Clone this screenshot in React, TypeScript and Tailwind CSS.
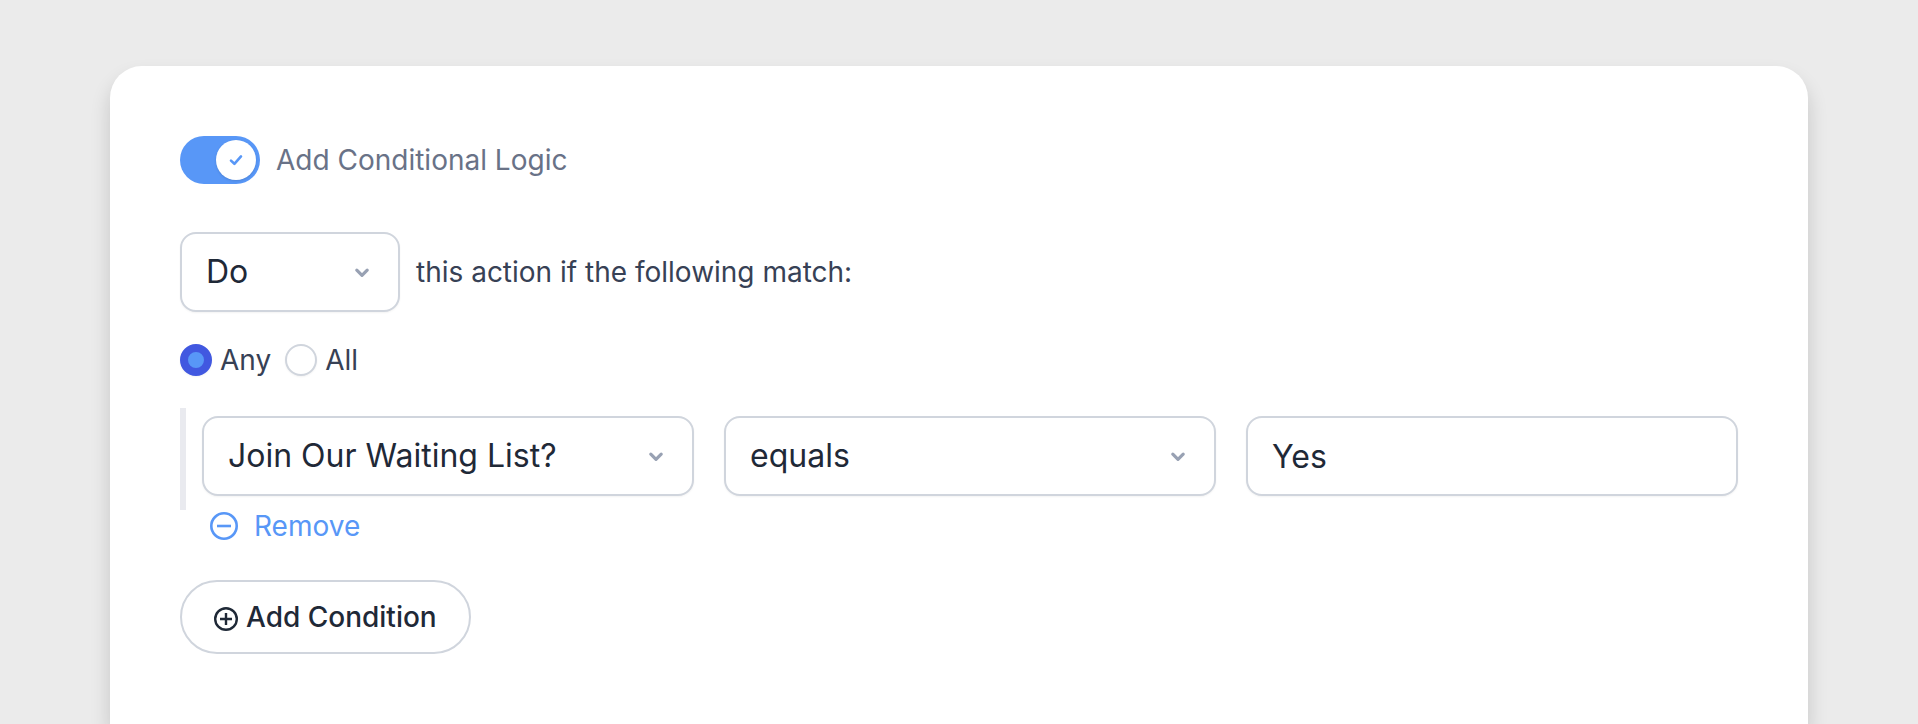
import { ReactNode, useState } from "react";

type SelectFieldProps = {
  label: string;
  value: string;
  options: string[];
  className?: string;
  onChange: (value: string) => void;
};

function ChevronIcon() {
  return (
    <svg
      aria-hidden="true"
      className="pointer-events-none absolute top-1/2 right-6 size-7 -translate-y-1/2 text-[#98a1b3]"
      fill="none"
      stroke="currentColor"
      strokeLinecap="round"
      strokeLinejoin="round"
      strokeWidth="3.2"
      viewBox="0 0 28 28"
    >
      <path d="M8.8 12.2l5.2 5.2 5.2-5.2" />
    </svg>
  );
}

function SelectField({ label, value, options, className = "", onChange }: SelectFieldProps) {
  return (
    <div className={`relative ${className}`}>
      <select
        aria-label={label}
        className="h-20 w-full appearance-none rounded-2xl border-2 border-[#d0d5dd] bg-white pr-16 pl-6 text-[32px] leading-12 text-[#1f2937] shadow-xs"
        onChange={(e) => onChange(e.target.value)}
        value={value}
      >
        {options.map((option) => (
          <option key={option}>{option}</option>
        ))}
      </select>
      <ChevronIcon />
    </div>
  );
}

type MatchRadioProps = {
  checked: boolean;
  children: ReactNode;
  onChange: () => void;
};

function MatchRadio({ checked, children, onChange }: MatchRadioProps) {
  return (
    <label className="flex items-center gap-2">
      <input
        checked={checked}
        className="size-8 appearance-none rounded-full border-2 border-[#d0d5dd] bg-white shadow-xs checked:border-8 checked:border-[#4158e0] checked:bg-[#5897f7]"
        name="match"
        onChange={onChange}
        type="radio"
      />
      {children}
    </label>
  );
}

export default function App() {
  const [enabled, setEnabled] = useState(true);
  const [action, setAction] = useState("Do");
  const [match, setMatch] = useState("any");
  const [field, setField] = useState("Join Our Waiting List?");
  const [operator, setOperator] = useState("equals");
  const [value, setValue] = useState("Yes");

  return (
    <main className="flex min-h-screen flex-col bg-[#ebebeb] px-[110px] pt-[66px] font-['Inter',sans-serif] text-[28px] leading-8 text-[#374155]">
      <section className="flex flex-1 flex-col items-start rounded-t-[32px] bg-white p-[70px] pb-0 shadow-[0_12px_20px_rgba(0,0,0,0.16)]">
        <label className="flex items-center gap-4 text-[#697287]">
          <span className="grid items-center">
            <input
              checked={enabled}
              className="col-start-1 row-start-1 h-12 w-20 appearance-none rounded-full bg-[#d0d5dd] checked:bg-[#5897f7]"
              onChange={(e) => setEnabled(e.target.checked)}
              role="switch"
              type="checkbox"
            />
            <span
              className={`pointer-events-none col-start-1 row-start-1 mx-1 flex size-10 items-center justify-center rounded-full bg-white text-[#5897f7] shadow-sm ${
                enabled ? "justify-self-end" : "justify-self-start"
              }`}
            >
              {enabled ? (
                <svg
                  aria-hidden="true"
                  className="size-5"
                  fill="none"
                  stroke="currentColor"
                  strokeLinecap="round"
                  strokeLinejoin="round"
                  strokeWidth="2.6"
                  viewBox="0 0 20 20"
                >
                  <path d="M5 10.6l3.4 3.2 6.6-7.4" />
                </svg>
              ) : null}
            </span>
          </span>
          Add Conditional Logic
        </label>

        <div className="mt-12 flex items-center gap-4">
          <SelectField
            className="w-[220px]"
            label="Action"
            onChange={setAction}
            options={["Do", "Don't"]}
            value={action}
          />
          <span>this action if the following match:</span>
        </div>

        <div className="mt-8 flex gap-[14px]">
          <MatchRadio checked={match === "any"} onChange={() => setMatch("any")}>
            Any
          </MatchRadio>
          <MatchRadio checked={match === "all"} onChange={() => setMatch("all")}>
            All
          </MatchRadio>
        </div>

        <div className="mt-8 grid w-full grid-cols-3 gap-[30px] border-l-6 border-[#e9eaef] pt-2 pb-[14px] pl-4">
          <SelectField
            label="Field"
            onChange={setField}
            options={["Join Our Waiting List?"]}
            value={field}
          />
          <SelectField
            label="Operator"
            onChange={setOperator}
            options={["equals", "does not equal"]}
            value={operator}
          />
          <input
            aria-label="Value"
            className="h-20 w-full rounded-2xl border-2 border-[#d0d5dd] bg-white px-6 text-[32px] leading-12 text-[#1f2937] shadow-xs"
            onChange={(e) => setValue(e.target.value)}
            type="text"
            value={value}
          />
        </div>

        <button className="ml-7 flex items-center gap-[14px] text-[#5897f7]" type="button">
          <svg
            aria-hidden="true"
            className="size-8"
            fill="none"
            stroke="currentColor"
            strokeWidth="2.6"
            viewBox="0 0 32 32"
          >
            <circle cx="16" cy="16" r="12.7" />
            <path d="M9 16h14" />
          </svg>
          Remove
        </button>

        <button
          className="mt-[38px] flex h-[74px] items-center gap-2 rounded-full border-2 border-[#d0d5dd] bg-white px-8 font-medium text-[#1f2937]"
          type="button"
        >
          <svg
            aria-hidden="true"
            className="mt-1 size-6"
            fill="none"
            stroke="currentColor"
            strokeWidth="2.4"
            viewBox="0 0 24 24"
          >
            <circle cx="12" cy="12" r="10.8" />
            <path d="M12 6v12M6 12h12" />
          </svg>
          Add Condition
        </button>
      </section>
    </main>
  );
}
